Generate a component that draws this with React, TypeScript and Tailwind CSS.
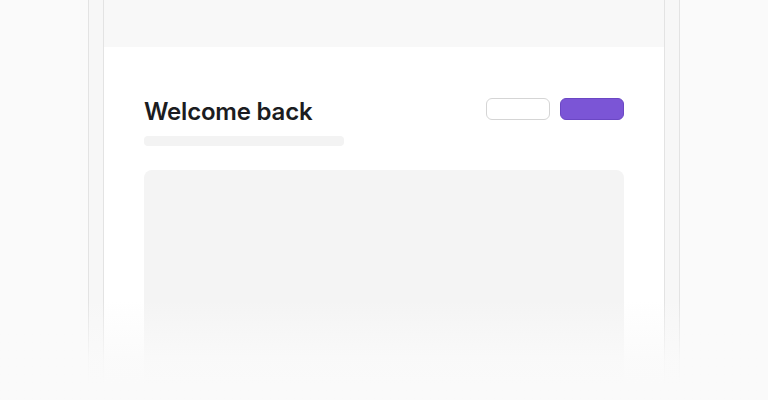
export default function App() {
  return (
    <div className="relative w-[768px] h-[400px] overflow-hidden bg-[#fafafa] flex justify-center" style={{ fontFamily: "Inter, 'Liberation Sans', sans-serif" }}>
      {/* device frame */}
      <div className="w-[592px] h-[460px] shrink-0 border-x border-[#e3e3e3] bg-[#f7f7f7] px-[14px]">
        <div className="h-full border-x border-[#e3e3e3] bg-white">
          <div className="h-[47px] bg-[#f8f8f8]" />
          <div className="px-10 pt-[49px]">
            <div className="flex justify-between items-start">
              <div>
                <h1 className="text-2xl leading-8 font-semibold text-[#1b1c21] tracking-[-0.2px]">Welcome back</h1>
                <div className="mt-2 w-[200px] h-[10px] rounded bg-[#f3f3f3]" />
              </div>
              <div className="flex gap-[10px] mt-[2px]">
                <button className="w-16 h-[22px] rounded-md bg-white border border-[#d5d5d5]" />
                <button className="w-16 h-[22px] rounded-md bg-[#7b55d6] border border-[#6b47c4]" />
              </div>
            </div>
            <div className="mt-6 h-[320px] rounded-lg bg-[#f4f4f4]" />
          </div>
        </div>
      </div>
      {/* bottom fade */}
      <div className="absolute inset-x-0 bottom-0 h-[100px] bg-gradient-to-b from-[#fafafa00] from-0% via-[#fafafae0] via-60% to-[#fafafa] to-85%" />
    </div>
  );
}
